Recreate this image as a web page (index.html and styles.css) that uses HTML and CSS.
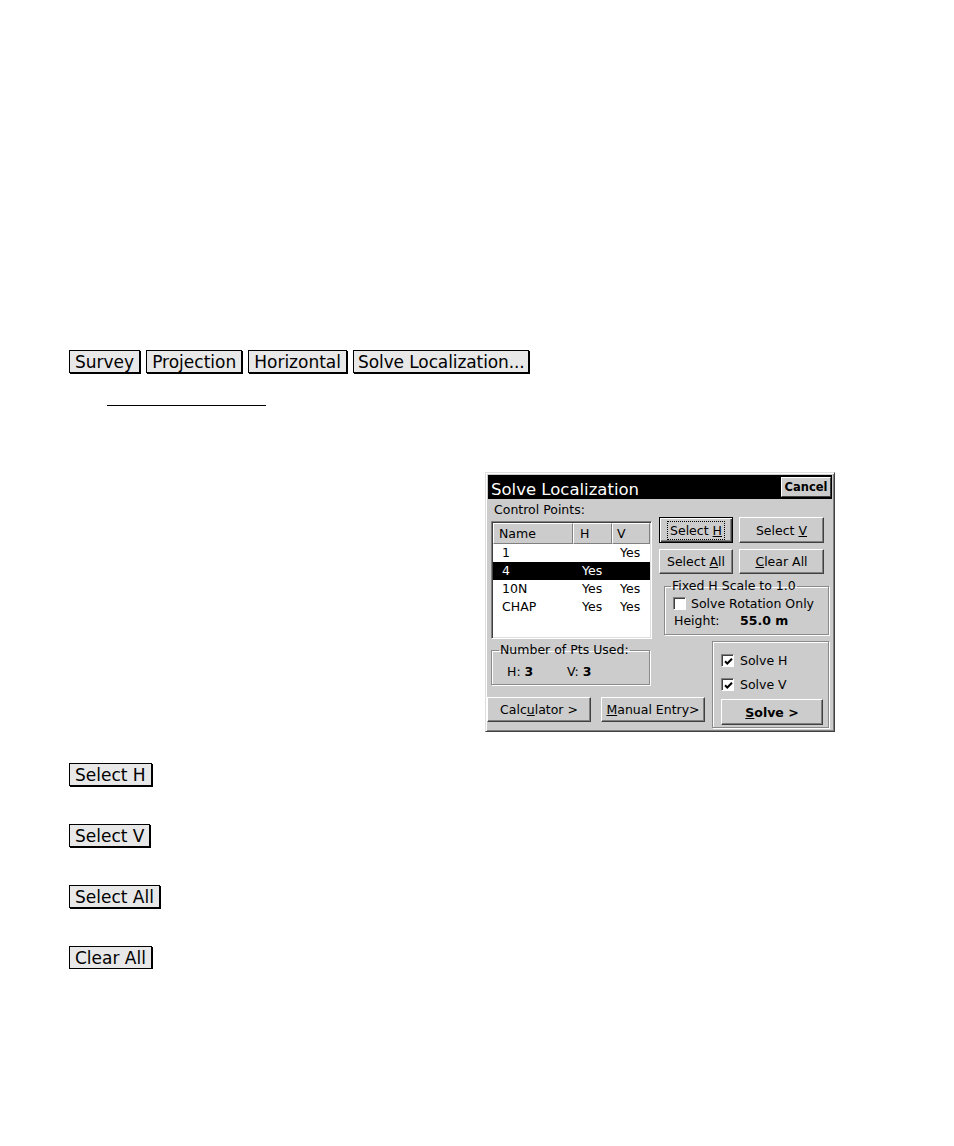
FILE: index.html
```html
<!DOCTYPE html>
<html>
<head>
<meta charset="utf-8">
<link rel="stylesheet" href="styles.css">
</head>
<body>
<div class="page">
  <div class="crumbs">
    <span class="kbtn">Survey</span>
    <span class="kbtn">Projection</span>
    <span class="kbtn">Horizontal</span>
    <span class="kbtn tight">Solve Localization...</span>
  </div>
  <div class="rule"></div>

  <div class="dialog">
    <div class="titlebar">
      <span class="title">Solve Localization</span>
      <span class="cancel">Cancel</span>
    </div>
    <div class="dlg-label">Control Points:</div>
    <div class="upper">
      <div class="listbox">
        <div class="lrow lhead"><span class="c1">Name</span><span class="c2">H</span><span class="c3">V</span></div>
        <div class="lrow"><span class="c1">1</span><span class="c2"></span><span class="c3">Yes</span></div>
        <div class="lrow sel"><span class="c1">4</span><span class="c2">Yes</span><span class="c3"></span></div>
        <div class="lrow"><span class="c1">10N</span><span class="c2">Yes</span><span class="c3">Yes</span></div>
        <div class="lrow"><span class="c1">CHAP</span><span class="c2">Yes</span><span class="c3">Yes</span></div>
      </div>
      <div class="rightcol">
        <div class="btnrow">
          <span class="wbtn focus w74"><span class="ring">Select <u>H</u></span></span>
          <span class="wbtn w85"><span>Select <u>V</u></span></span>
        </div>
        <div class="btnrow second">
          <span class="wbtn w74"><span>Select <u>A</u>ll</span></span>
          <span class="wbtn w85"><span><u>C</u>lear All</span></span>
        </div>
        <fieldset class="grp fixed">
          <legend>Fixed H Scale to 1.0</legend>
          <div class="chkrow"><span class="chk"></span><span>Solve Rotation Only</span></div>
          <div class="hrow"><span class="hlab">Height:</span><b>55.0 m</b></div>
        </fieldset>
      </div>
    </div>
    <div class="lower">
      <div class="lowleft">
        <fieldset class="grp num">
          <legend>Number of Pts Used:</legend>
          <div class="nums"><span class="nh">H: <b>3</b></span><span>V: <b>3</b></span></div>
        </fieldset>
        <div class="btnrow2">
          <span class="wbtn w104"><span>Calc<u>u</u>lator &gt;</span></span>
          <span class="wbtn w104"><span><u>M</u>anual Entry&gt;</span></span>
        </div>
      </div>
      <div class="solvebox">
        <div class="chkrow s1"><span class="chk on"><svg width="9" height="9" viewBox="0 0 9 9"><path d="M1 4.2 L3.3 6.5 L8 1.8" fill="none" stroke="#000" stroke-width="2"/></svg></span><span>Solve H</span></div>
        <div class="chkrow s2"><span class="chk on"><svg width="9" height="9" viewBox="0 0 9 9"><path d="M1 4.2 L3.3 6.5 L8 1.8" fill="none" stroke="#000" stroke-width="2"/></svg></span><span>Solve V</span></div>
        <span class="wbtn solve"><b><u>S</u>olve &gt;</b></span>
      </div>
    </div>
  </div>

  <div class="keys">
    <span class="kbtn">Select H</span>
    <span class="kbtn">Select V</span>
    <span class="kbtn">Select All</span>
    <span class="kbtn">Clear All</span>
  </div>
</div>
</body>
</html>
```

FILE: styles.css
```css
html, body {
  margin: 0;
  padding: 0;
  background: #ffffff;
}
body {
  font-family: "DejaVu Sans", Verdana, sans-serif;
  color: #000;
}
.page {
  padding-top: 350px;
}

/* page key buttons */
.kbtn {
  display: inline-block;
  box-sizing: border-box;
  height: 23px;
  font-size: 17px;
  line-height: 22px;
  padding: 0 5px;
  background: #e8e8e8;
  border: 1px solid #000;
  box-shadow: 1px 1px 0 #000;
  white-space: nowrap;
}
.kbtn.tight {
  padding: 0 3px 0 4px;
  letter-spacing: -0.1px;
}
.crumbs {
  display: flex;
  gap: 6px;
  margin-left: 69px;
}
.rule {
  margin: 32px 0 0 107px;
  width: 159px;
  border-top: 1px solid #000;
}

/* dialog */
.dialog {
  box-sizing: border-box;
  margin: 66px 0 0 485px;
  width: 350px;
  height: 260px;
  padding: 2px 2px;
  background: #cccccc;
  border: 1px solid;
  border-color: #dedede #404040 #404040 #dedede;
  box-shadow: inset 1px 1px 0 #ffffff, inset -1px -1px 0 #808080;
  font-size: 12.5px;
}
.titlebar {
  height: 24px;
  background: #000;
  color: #fff;
  display: flex;
  align-items: center;
  justify-content: space-between;
  padding: 0 1px 0 3px;
}
.title {
  font-size: 16.5px;
  line-height: 24px;
  padding-top: 5px;
}
.cancel {
  box-sizing: border-box;
  height: 20px;
  width: 50px;
  background: #cccccc;
  color: #000;
  font-weight: bold;
  font-size: 11.5px;
  line-height: 18px;
  text-align: center;
  border: 1px solid;
  border-color: #fff #404040 #404040 #fff;
}
.dlg-label {
  padding-left: 6px;
  margin-top: 3px;
  line-height: 15px;
  height: 15px;
}
.upper {
  display: flex;
  align-items: flex-start;
  margin-top: 0;
}
.listbox {
  box-sizing: border-box;
  margin: 4px 0 0 3px;
  width: 161px;
  height: 118px;
  background: #fff;
  border: 1px solid;
  border-color: #808080 #fff #fff #808080;
  box-shadow: inset 1px 1px 0 #404040, inset -1px -1px 0 #dedede;
  padding: 1px;
}
.lrow {
  display: flex;
  height: 18px;
  line-height: 18px;
}
.lrow .c1 { width: 80px; padding-left: 9px; box-sizing: border-box; }
.lrow .c2 { width: 39px; padding-left: 9px; box-sizing: border-box; }
.lrow .c3 { width: 38px; padding-left: 8px; box-sizing: border-box; }
.lhead {
  height: 21px;
  line-height: 19px;
  background: #cccccc;
}
.lhead span {
  border: 1px solid;
  border-color: #fff #808080 #808080 #fff;
}
.lhead .c1 { padding-left: 5px; }
.lhead .c2 { padding-left: 6px; }
.lhead .c3 { padding-left: 4px; }
.lrow.sel {
  background: #000;
  color: #fff;
}

.rightcol {
  margin-left: 7px;
  width: 170px;
}
.btnrow {
  display: flex;
  gap: 6px;
  height: 26px;
}
.btnrow.second {
  margin-top: 6px;
  height: 25px;
}
.wbtn {
  box-sizing: border-box;
  display: flex;
  align-items: center;
  justify-content: center;
  background: #cccccc;
  border: 1px solid;
  border-color: #fff #404040 #404040 #fff;
  box-shadow: inset -1px -1px 0 #808080;
  white-space: nowrap;
}
.w74 { width: 74px; }
.w85 { width: 85px; }
.w104 { width: 104px; height: 25px; }
.wbtn.focus {
  border: 1px solid #000;
  box-shadow: inset 1px 1px 0 #fff, inset -1px -1px 0 #404040, inset -2px -2px 0 #808080;
}
.ring {
  outline: 1px dotted #000;
  outline-offset: 0;
  padding: 1px 2px;
  line-height: 15px;
}

.grp {
  margin: 0;
  border: 1px solid #8a8a8a;
  box-shadow: inset 1px 1px 0 #fff, 1px 1px 0 #fff;
  min-inline-size: 0;
}
.grp legend {
  padding: 0 1px;
  line-height: 14px;
}
.fixed {
  margin: 5px 0 0 5px;
  width: 165px;
  box-sizing: border-box;
  padding: 0 6px 5px 6px;
}
.chkrow {
  display: flex;
  align-items: center;
  height: 17px;
}
.fixed .chkrow {
  margin-left: 2px;
  margin-top: 2px;
}
.chk {
  box-sizing: border-box;
  width: 13px;
  height: 13px;
  background: #fff;
  border: 1px solid;
  border-color: #808080 #fff #fff #808080;
  box-shadow: inset 1px 1px 0 #404040;
  margin-right: 5px;
  display: flex;
  align-items: center;
  justify-content: center;
  flex: none;
}
.chk svg { display: block; margin: 1px 0 0 1px; }
.hrow {
  display: flex;
  height: 17px;
  line-height: 17px;
  margin-left: 3px;
}
.hlab { width: 66px; }

.lower {
  display: flex;
  align-items: flex-start;
  margin-top: 2px;
}
.lowleft {
  margin-left: -1px;
  width: 218px;
}
.num {
  margin: 2px 0 0 4px;
  width: 159px;
  box-sizing: border-box;
  padding: 0 7px 2px 7px;
}
.nums {
  display: flex;
  height: 20px;
  line-height: 20px;
  margin-top: 5px;
  padding-left: 8px;
}
.nh { width: 60px; }
.btnrow2 {
  display: flex;
  gap: 10px;
  margin-top: 12px;
}
.solvebox {
  box-sizing: border-box;
  margin-left: 7px;
  width: 117px;
  height: 87px;
  border: 1px solid #8a8a8a;
  box-shadow: inset 1px 1px 0 #fff, 1px 1px 0 #fff;
  padding: 0 0 0 8px;
}
.solvebox .chkrow.s1 { margin-top: 10px; }
.solvebox .chkrow.s2 { margin-top: 7px; }
.solvebox .chk { margin-right: 6px; }
.wbtn.solve {
  width: 102px;
  height: 26px;
  margin-top: 6px;
  margin-left: 0;
}

.keys {
  display: flex;
  flex-direction: column;
  align-items: flex-start;
  gap: 38px;
  margin: 31px 0 0 69px;
}
```
